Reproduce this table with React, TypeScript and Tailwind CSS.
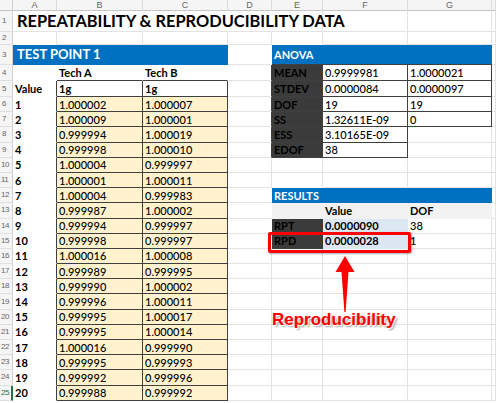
import React from 'react';

type Fill = 'blue' | 'beige' | 'dark' | 'white' | 'gray' | 'lblue';

interface Spec {
  t?: string;
  span?: number;
  fill?: Fill;
  box?: boolean;
  txt?: string;
}

const FILL: Record<Fill, string> = {
  blue: 'bg-[#0070c0]',
  beige: 'bg-[#fff2cc]',
  dark: 'bg-[#3b3b3b]',
  white: 'bg-white',
  gray: 'bg-[#f2f2f2]',
  lblue: 'bg-[#dde7f3]',
};

// H is only a sliver at the right edge, so its letter is off-screen
const COLS = ['A', 'B', 'C', 'D', 'E', 'F', 'G', ''];

const TECH: [string, string][] = [
  ['1.000002', '1.000007'],
  ['1.000009', '1.000001'],
  ['0.999994', '1.000019'],
  ['0.999998', '1.000010'],
  ['1.000004', '0.999997'],
  ['1.000001', '1.000011'],
  ['1.000004', '0.999983'],
  ['0.999987', '1.000002'],
  ['0.999994', '0.999997'],
  ['0.999998', '0.999997'],
  ['1.000016', '1.000008'],
  ['0.999989', '0.999995'],
  ['0.999990', '1.000002'],
  ['0.999996', '1.000011'],
  ['0.999995', '1.000017'],
  ['0.999995', '1.000014'],
  ['1.000016', '0.999990'],
  ['0.999995', '0.999993'],
  ['0.999992', '0.999996'],
  ['0.999988', '0.999992'],
];

const ANOVA: [string, string, string?][] = [
  ['MEAN', '0.9999981', '1.0000021'],
  ['STDEV', '0.0000084', '0.0000097'],
  ['DOF', '19', '19'],
  ['SS', '1.32611E-09', '0'],
  ['ESS', '3.10165E-09'],
  ['EDOF', '38'],
];

const sheet: Record<string, Spec> = {};
const set = (r: number, c: number, s: Spec) => {
  sheet[`${r},${c}`] = s;
};
const get = (r: number, c: number) => sheet[`${r},${c}`];

set(1, 1, { t: 'REPEATABILITY & REPRODUCIBILITY DATA', span: 5, txt: 'text-[16.4px] font-bold pl-[4px]' });
set(3, 1, { t: 'TEST POINT 1', span: 3, fill: 'blue', txt: 'text-[13px] font-bold text-white pl-[4px]' });
set(3, 5, { t: 'ANOVA', span: 3, fill: 'blue', txt: 'font-bold text-white' });
set(4, 1, { fill: 'white' });
set(4, 2, { t: 'Tech A', fill: 'white', txt: 'font-bold' });
set(4, 3, { t: 'Tech B', fill: 'white', txt: 'font-bold' });
set(5, 1, { t: 'Value', fill: 'white', txt: 'font-bold' });
set(5, 2, { t: '1g', fill: 'white', box: true, txt: 'font-bold' });
set(5, 3, { t: '1g', fill: 'white', box: true, txt: 'font-bold' });
TECH.forEach(([a, b], i) => {
  set(6 + i, 1, { t: String(i + 1), fill: 'white', txt: 'font-bold' });
  set(6 + i, 2, { t: a, fill: 'beige', box: true });
  set(6 + i, 3, { t: b, fill: 'beige', box: true });
});
ANOVA.forEach(([label, f, g], i) => {
  set(4 + i, 5, { t: label, fill: 'dark', box: true, txt: 'font-bold text-[#f2f2f2]' });
  set(4 + i, 6, { t: f, fill: 'white', box: true });
  if (g !== undefined) set(4 + i, 7, { t: g, fill: 'white', box: true });
});
set(12, 5, { t: 'RESULTS', span: 3, fill: 'blue', txt: 'font-bold text-white' });
set(13, 5, { fill: 'gray' });
set(13, 6, { t: 'Value', fill: 'gray', txt: 'font-bold' });
set(13, 7, { t: 'DOF', fill: 'gray', txt: 'font-bold' });
set(14, 5, { t: 'RPT', fill: 'dark', txt: 'font-bold text-[#f2f2f2]' });
set(14, 6, { t: '0.0000090', fill: 'lblue', txt: 'font-bold text-[#0070c0]' });
set(14, 7, { t: '38' });
set(15, 5, { t: 'RPD', fill: 'dark', txt: 'font-bold text-[#f2f2f2]' });
set(15, 6, { t: '0.0000028', fill: 'lblue', txt: 'font-bold text-[#0070c0]' });
set(15, 7, { t: '1' });

type Edge = 'dark' | 'none' | 'grid';
const edge = (a?: Spec, b?: Spec): Edge => {
  if (a?.box || b?.box) return 'dark';
  if (a?.fill || b?.fill) return 'none';
  return 'grid';
};
const RIGHT: Record<Edge, string> = {
  dark: 'border-r-[#3f3f3f]',
  none: 'border-r-transparent',
  grid: 'border-r-[#e3e3e3]',
};
const BOTTOM: Record<Edge, string> = {
  dark: 'border-b-[#3f3f3f]',
  none: 'border-b-transparent',
  grid: 'border-b-[#e3e3e3]',
};

function Cell({ r, c }: { r: number; c: number }) {
  const s = get(r, c) || {};
  const span = s.span || 1;
  const right = get(r, c + span);
  const below = get(r + 1, c);
  const spanCls = span === 5 ? 'col-span-5' : span === 3 ? 'col-span-3' : '';
  const weight = s.txt?.includes('font-bold') ? '' : 'font-medium';
  return (
    <div
      className={`flex items-center overflow-visible whitespace-nowrap border-r border-b pl-[2px] text-[11px] leading-none text-black ${weight} ${spanCls} ${
        s.fill ? FILL[s.fill] : ''
      } ${RIGHT[edge(s, right)]} ${BOTTOM[edge(s, below)]} ${s.txt || ''}`}
    >
      {s.t}
    </div>
  );
}

export default function App() {
  const rows = Array.from({ length: 25 }, (_, i) => i + 1);
  return (
    <div className="relative h-[403px] w-[496px] overflow-hidden bg-white font-['Lato','Liberation_Sans',sans-serif]">
      <div className="grid grid-cols-[13px_44px_86px_85px_44px_51px_85px_84px_1fr] grid-rows-[11px_21px_13px_20px_16px_16px_repeat(20,15.2px)]">
        <div className="border-r border-b border-r-[#d0d0d0] border-b-[#c6c6c6] bg-[#f5f5f5]" />
        {COLS.map((l, i) => (
          <div
            key={i}
            className="flex items-center justify-center border-r border-b border-r-[#dcdcdc] border-b-[#c6c6c6] bg-[#f5f5f5] font-['Liberation_Sans',sans-serif] text-[9px] leading-none text-[#666]"
          >
            {l}
          </div>
        ))}
        {rows.map((r) => {
          const cells: React.ReactNode[] = [];
          for (let c = 1; c <= 8; ) {
            cells.push(<Cell key={`${r}-${c}`} r={r} c={c} />);
            c += get(r, c)?.span || 1;
          }
          return (
            <React.Fragment key={r}>
              <div
                className={`flex items-center border-b border-b-[#e0e0e0] bg-[#f5f5f5] font-['Liberation_Sans',sans-serif] text-[8px] leading-none ${
                  r < 10 ? 'pl-[2px]' : 'pl-px tracking-[-0.5px]'
                } ${r === 25 ? 'border-r-2 border-r-[#217346] text-[#217346]' : 'border-r border-r-[#d0d0d0] text-[#666]'}`}
              >
                {r}
              </div>
              {cells}
            </React.Fragment>
          );
        })}
      </div>

      <div className="absolute left-[268px] top-[232px] h-[21px] w-[143px] rounded-[2px] border-[3px] border-[#ff0000] shadow-[1px_1px_2px_rgba(0,0,0,0.35)]" />

      <svg className="absolute left-0 top-0" width="496" height="403" viewBox="0 0 496 403">
        <path
          d="M345 256 L354.5 272 L348.5 272 L345.6 312 L344.4 312 L341.5 272 L335.5 272 Z"
          fill="#ff0000"
        />
      </svg>

      <div className="absolute left-[272px] top-[311px] font-['Liberation_Sans',sans-serif] text-[17px] font-bold leading-none text-[#ff0000] [text-shadow:1px_1px_0_#fff,2px_2px_2px_#9a9a9a]">
        Reproducibility
      </div>
    </div>
  );
}
